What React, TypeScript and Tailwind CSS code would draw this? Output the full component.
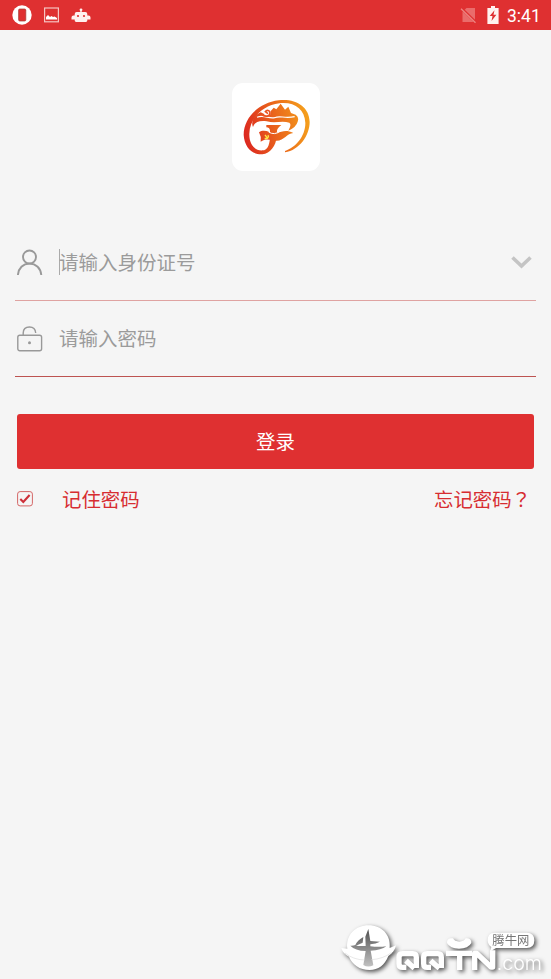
import React from "react";

function StatusBar() {
  return (
    <header className="flex h-[30px] items-center justify-between bg-[#df3031] pl-3 pr-[10px] text-white">
      <div className="flex items-center">
        <svg className="h-5 w-5" viewBox="0 0 20 20">
          <circle cx="10" cy="10" r="9.7" fill="white" />
          <rect x="6.6" y="4" width="7.2" height="12" rx="1.2" fill="#df3031" stroke="#a33a35" strokeWidth=".7" />
        </svg>
        <svg className="ml-3 h-4 w-[15px]" viewBox="0 0 15 16" fill="none">
          <rect x=".6" y="1" width="13.8" height="13.8" stroke="#f6c3c1" strokeWidth="1.2" />
          <path d="M2 12.5V10l2-2 2 2 1.5-1 1.5 1 1.5-.5 2.5 1.5v1.5Z" fill="white" />
        </svg>
        <svg className="ml-3 mt-0.5 h-4 w-5" viewBox="0 0 20 16" fill="#fff0ef">
          <path d="M9.3 1h1.4v3h3.6q2 0 2 2v1.4h1.2q2 0 2 2v2h-3.2v1.2q0 1.4-1.4 1.4H5.1q-1.4 0-1.4-1.4v-1.2H.5v-2q0-2 2-2h1.2V6q0-2 2-2h3.6Z" />
          <circle cx="10" cy="1.8" r="1.4" />
          <circle cx="7" cy="8" r="1.1" fill="#df3031" />
          <circle cx="13" cy="8" r="1.1" fill="#df3031" />
        </svg>
      </div>
      <div className="flex items-center">
        <svg className="h-[18px] w-[17px]" viewBox="0 0 17 18">
          <path d="M2.5 6 6.5 2H15v14H2.5Z" fill="#ea6c6b" />
          <path d="m1 2 15 14.5" stroke="#df3031" strokeWidth="2.6" />
          <path d="m1 2.7 14.5 14" stroke="#ec8582" strokeWidth="1.3" />
        </svg>
        <svg className="ml-[10px] h-[18px] w-3" viewBox="0 0 12 18">
          <path d="M4 0h4v2h3.6v16H.4V2H4Z" fill="#fff2ef" />
          <path d="M7.5 4.3 2.7 10h2.8l-1 5 4.9-6.3H6.5Z" fill="#df3031" />
        </svg>
        <span className="ml-2 mt-1 w-[34px] whitespace-nowrap font-[Roboto] text-[17.5px] leading-none">3:41</span>
      </div>
    </header>
  );
}

function AppLogo() {
  return (
    <div className="mx-auto mt-[53px] h-[88px] w-[88px] rounded-[11px] bg-white">
      <svg className="h-full w-full" viewBox="-24 -36 264 264" fill="none">
        <defs>
          <linearGradient id="flame" gradientUnits="userSpaceOnUse" x1="12" y1="110" x2="210" y2="70">
            <stop stopColor="#dc2920" />
            <stop offset=".5" stopColor="#ea671b" />
            <stop offset="1" stopColor="#f5a21c" />
          </linearGradient>
        </defs>
        <g fill="url(#flame)">
          <path d="M135 172C178 166 209 121 209 81C208 34 166 10 116 16C57 23 11 68 11 119C13 156 36 180 67 178C91 176 108 151 110 126L111 107Q112 99 124 90H79V97Q90 98 90 108V128C88 154 81 165 68 166C43 168 27 146 28 116C29 71 68 31 118 25C163 20 194 42 196 83C197 123 167 158 135 168Z" />
          <path d="M39 96C31 79 44 59 62 52L80 61L93 47L101 38L109 43L122 26L135 44L145 35L153 54L167 59Q178 66 173 80Q169 96 145 107Q156 88 148 83C128 77 103 85 80 79C54 76 44 83 39 96Z" />
          <path d="M57 112C75 99 91 117 109 114C128 110 137 103 160 114C140 115 132 139 107 137C91 136 79 128 62 140Q65 126 57 112Z" />
        </g>
        <path d="M51 67C72 57 86 73 104 68C122 60 131 72 164 65" stroke="white" strokeWidth="3.5" />
        <path d="M86 111Q103 122 122 108" stroke="white" strokeWidth="3" />
        <circle cx="82" cy="53" r="10" fill="white" />
        <path d="M65 59C77 66 90 65 90 54C90 45 80 44 76 50L84 56" stroke="#ea5420" strokeWidth="5" />
        <path d="M75 120 84 131M74 130C82 132 88 126 84 120" stroke="#ffe445" strokeWidth="4" />
      </svg>
    </div>
  );
}

function Watermark() {
  return (
    <svg className="absolute bottom-0 right-0 h-16 w-[221px] drop-shadow-[2px_2px_2px_rgba(0,0,0,0.65)]" viewBox="0 0 663 192" fill="white">
      <defs>
        <filter id="inset" x="-20%" y="-20%" width="140%" height="140%">
          <feGaussianBlur stdDeviation="2" />
        </filter>
        <linearGradient id="recess" x1="0" y1="0" x2="0" y2="1">
          <stop stopColor="#505050" />
          <stop offset="1" stopColor="#c2c2c2" />
        </linearGradient>
      </defs>
      <path d="M52 101C47 59 78 31 116 31C155 31 183 59 179 99L198 91C195 105 188 114 175 123C164 151 145 165 119 165C89 165 66 148 57 125C45 119 37 111 34 99Z" />
      <g filter="url(#inset)" fill="url(#recess)">
        <path d="M115 42 106 65 107 93Q91 94 78 92L98 83L100 66Q83 75 76 90Q68 93 61 92Q75 107 107 108L100 150Q114 159 130 151L122 107Q154 106 169 94Q146 97 121 94L121 88Q138 86 150 80L121 78Z" />
      </g>
      <path d="M45 114Q69 134 104 135M124 134Q159 132 184 113" fill="none" stroke="#ddd" strokeWidth="2" />
      <g fill="none" stroke="white" strokeWidth="16" strokeLinejoin="round">
        <path d="M229 157H218Q207 157 207 146V127Q207 116 218 116H248Q259 116 259 127V159M228 137 253 160" />
        <path d="M303 157H292Q281 157 281 146V127Q281 116 292 116H323Q334 116 334 127V159M302 137 328 160" />
        <path d="M348 115H426M389 115V165M434 165V115H440L483 156H488V106" />
      </g>
      <path d="M351 84Q350 68 369 70Q374 80 388 80Q402 80 407 70Q425 69 424 84Q415 101 387 101Q360 101 351 84Z" />
      <path d="M494 53H590Q613 53 613 76Q613 99 590 99H498L481 109L484 96Q473 89 473 76Q473 53 494 53Z" />
      <text x="487" y="91" textLength="111" fontFamily="Noto Sans CJK SC, sans-serif" fontSize="37" fill="#777">腾牛网</text>
      <text x="500" y="165" textLength="136" lengthAdjust="spacingAndGlyphs" fontFamily="Inter, sans-serif" fontSize="57" fontWeight="300" fill="white">.com</text>
    </svg>
  );
}

export default function App() {
  return (
    <div className="relative h-[979px] w-full overflow-hidden bg-[#f5f5f5] font-['Noto_Sans_CJK_SC',sans-serif] text-[19.4px]">
      <StatusBar />
      <main>
        <AppLogo />
        <form className="mx-[15px] mt-[53px]">
          <div className="flex h-[77px] items-center border-b border-[#dfa3a1] text-[#9b9b9b]">
            <svg className="ml-0.5 h-[27px] w-[26px]" viewBox="0 0 26 27" fill="none" stroke="#999" strokeWidth="1.9">
              <circle cx="12.5" cy="8" r="6.5" />
              <path d="M.9 26C1.4 19.2 6 14.6 12.5 14.6S23.7 19.2 24.3 26" />
            </svg>
            <span className="ml-4 h-[26px] w-px bg-[#aaa]" />
            <span className="-ml-px flex-1 text-[19.5px] leading-none">请输入身份证号</span>
            <svg className="mr-1 h-[15px] w-[21px]" viewBox="0 0 21 15" fill="none" stroke="#c4c4c4" strokeWidth="3.6">
              <path d="m1.5 2.5 9 8.5 9-8.5" />
            </svg>
          </div>
          <div className="flex h-[76px] items-center border-b border-[#bd5351] text-[#9b9b9b]">
            <svg className="ml-0.5 h-[26px] w-[26px]" viewBox="0 0 26 26" fill="none" stroke="#999" strokeWidth="1.4">
              <rect x=".8" y="9.2" width="23.8" height="15.6" rx="2" />
              <path d="M6.2 9V7C6.2 3 8.8 1 12.5 1S18.4 3 18.7 7" />
              <circle cx="12.5" cy="16.8" r="1.5" fill="#999" stroke="none" />
            </svg>
            <span className="-mt-0.5 ml-4 text-[19.5px] leading-none">请输入密码</span>
          </div>
          <button type="button" className="ml-0.5 mt-[37px] flex h-[55px] w-[517px] items-center justify-center rounded-[3px] bg-[#df3031] pb-0.5 leading-none text-white">登录</button>
          <div className="mt-5 flex items-center pl-0.5 pr-[5px] leading-none text-[#d72d31]">
            <svg className="h-4 w-4" viewBox="0 0 16 16" fill="none">
              <rect x=".6" y=".6" width="14.8" height="14.3" rx="2.5" stroke="#d46666" />
              <path d="m3.3 8 3 3 6.3-7" stroke="#ce3039" strokeWidth="2.1" />
            </svg>
            <span className="ml-[29px]">记住密码</span>
            <span className="ml-auto flex">忘记密码<span lang="zh-TW" className="font-['Noto_Sans_CJK_TC',sans-serif]">？</span></span>
          </div>
        </form>
      </main>
      <Watermark />
    </div>
  );
}
